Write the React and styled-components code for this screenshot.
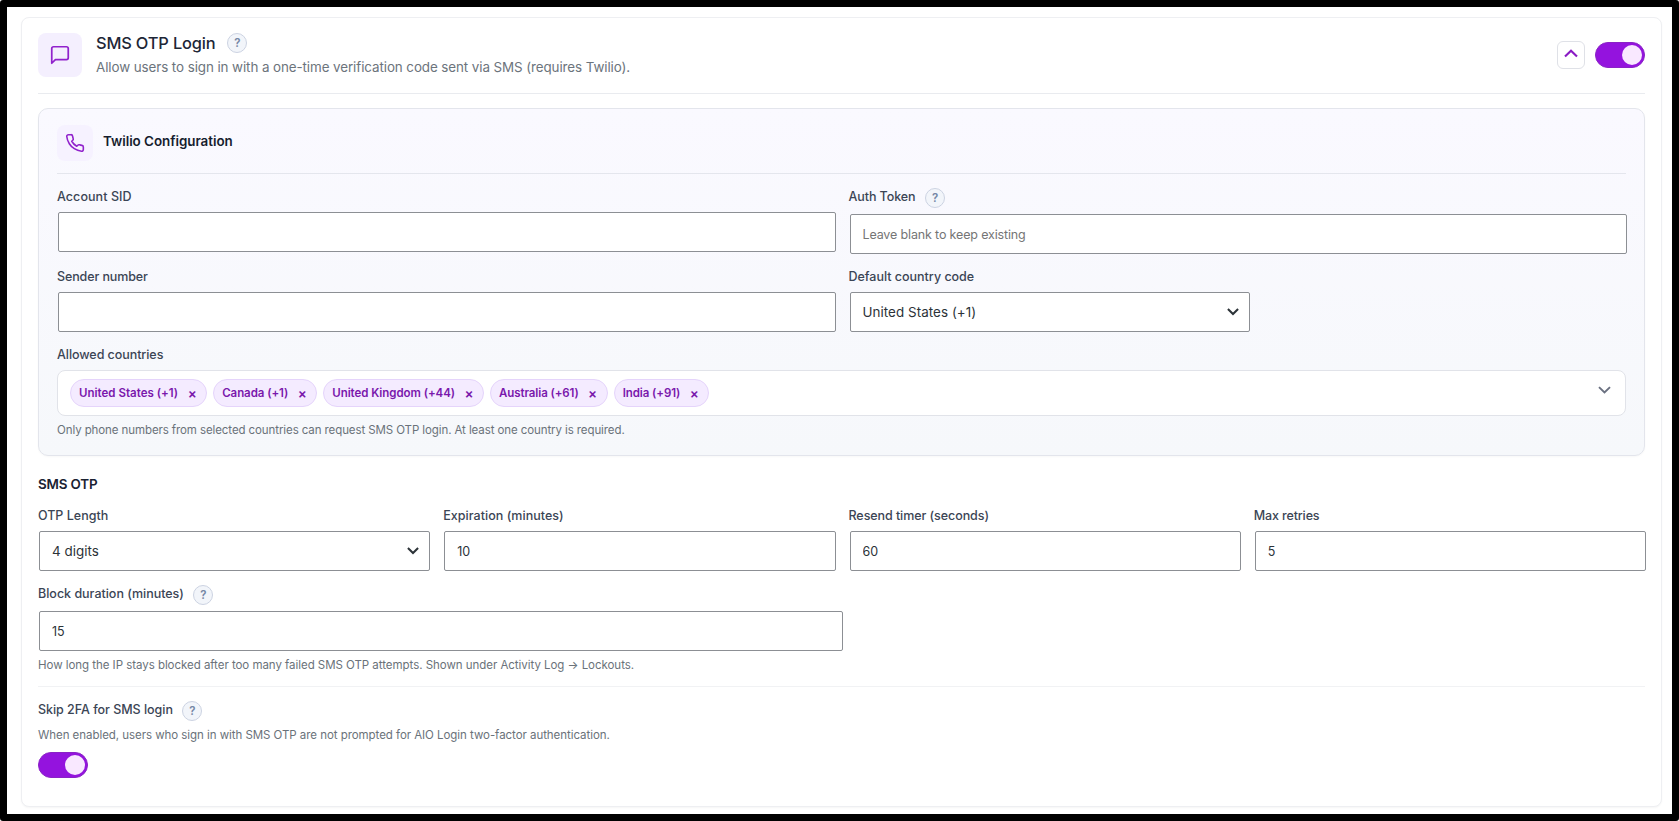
import React from "react";
import styled, { createGlobalStyle, css } from "styled-components";

const GlobalStyle = createGlobalStyle`
  *, *::before, *::after { box-sizing: border-box; }
  body { margin: 0; background: #fff; }
  body, input, button {
    font-family: Inter, "Liberation Sans", sans-serif;
  }
`;

const spacing = css`
  letter-spacing: ${({ $ls = 0 }) => $ls}px;
`;

const Frame = styled.div`
  height: 821px;
  padding: 10px 10px 7px 14px;
  background: #fff;
  border: 7px solid #000;
  border-radius: 3px;
`;

const Card = styled.main`
  height: 790px;
  padding: 15px 16px;
  background: #fff;
  border: 1px solid #eeeff2;
  border-radius: 8px;
  box-shadow: 0 1px 2px rgba(0, 0, 0, 0.04);
`;

const Header = styled.header`
  display: flex;
  align-items: center;
  padding-bottom: 16px;
  border-bottom: 1px solid #e9ebef;
`;

const IconTile = styled.span`
  display: grid;
  flex: none;
  place-items: center;
  width: ${({ $size }) => $size}px;
  height: ${({ $size }) => $size}px;
  background: ${({ $pale }) => ($pale ? "#f6f2ff" : "#f4effe")};
  border-radius: 8px;
  color: #9122cc;
`;

const HeaderText = styled.div`
  flex: 1;
  height: 46px;
  margin: -1px 0 -1px 14px;
`;

const TitleRow = styled.div`
  display: flex;
  gap: 12px;
  height: 25px;
`;

const Title = styled.h1`
  margin: 0;
  color: #1d2636;
  font-size: 16.4px;
  font-weight: 500;
  line-height: 23px;
  white-space: nowrap;
  ${spacing}
`;

const Subtitle = styled.p`
  margin: 0;
  color: #6c747c;
  font-size: 13.4px;
  line-height: 20px;
  ${spacing}
`;

const HelpBadge = styled.span`
  display: grid;
  flex: none;
  place-items: center;
  width: 20px;
  height: 20px;
  margin-top: 1px;
  background: #f2f5fa;
  border: 1px solid #ccd3e2;
  border-radius: 50%;
  color: #7587a6;
  font-size: 11.5px;
  font-weight: 600;
  line-height: 18px;
`;

const CollapseButton = styled.button`
  display: grid;
  place-items: center;
  width: 28px;
  height: 28px;
  margin-right: 10px;
  padding: 0 0 4px;
  background: #fff;
  border: 1px solid #dfe1e7;
  border-radius: 6px;
  color: #8a1bc4;
`;

const Switch = styled.button`
  display: flex;
  align-items: center;
  justify-content: flex-end;
  width: 50px;
  height: 26px;
  padding: 0 2px;
  background: #9413de;
  border: 1px solid #8a22c6;
  border-radius: 13px;
`;

const Knob = styled.span`
  width: 20px;
  height: 20px;
  background: #f9e8ff;
  border-radius: 50%;
`;

const Panel = styled.section`
  height: 348px;
  margin-top: 14px;
  padding: 16px 18px;
  background: linear-gradient(180deg, #faf9ff 0%, #f6f8fb 100%);
  border: 1px solid #e3e5ec;
  border-radius: 10px;
  box-shadow: 0 1px 2px rgba(0, 0, 0, 0.03);
`;

const PanelHeader = styled.div`
  display: flex;
  align-items: center;
  gap: 10px;
  margin-bottom: 13px;
  padding-bottom: 12px;
  border-bottom: 1px solid #e4e6ed;
`;

const PanelTitle = styled.h2`
  margin: 0;
  padding-bottom: 4px;
  color: #161d2e;
  font-size: 13.4px;
  font-weight: 600;
  line-height: 20px;
  ${spacing}
`;

const SectionTitle = styled.h2`
  height: 32px;
  margin: 18px 0 0;
  color: #1a2232;
  font-size: 13.4px;
  font-weight: 600;
  line-height: 20px;
  ${spacing}
`;

const Grid = styled.div`
  display: grid;
  grid-template-columns: repeat(${({ $cols }) => $cols}, 1fr);
  gap: 13px 14px;
`;

const FieldBox = styled.div`
  width: ${({ $half }) => ($half ? "804px" : "auto")};
  margin-top: ${({ $top = 0 }) => $top}px;
`;

const LabelRow = styled.div`
  display: flex;
  gap: 9.5px;
  margin-bottom: ${({ $tight }) => ($tight ? 4 : 5)}px;
`;

const Label = styled.label`
  color: #3b4555;
  font-size: 12.5px;
  font-weight: 500;
  line-height: 20px;
  white-space: nowrap;
  ${spacing}
`;

const HelpSlot = styled.span`
  height: 22px;
`;

const Control = styled.input`
  display: block;
  width: 100%;
  height: 40px;
  padding: 0 12px;
  background: #fff;
  border: 1px solid #8c8f94;
  border-radius: 2px;
  color: #2c3338;
  font-size: 12.5px;
  transform: translateX(1px);
  ${spacing}

  &::placeholder {
    color: #757575;
    opacity: 1;
  }
`;

const SelectBox = styled.div`
  display: flex;
  align-items: center;
  justify-content: space-between;
  width: ${({ $width }) => $width || "100%"};
  height: 40px;
  padding: 0 10px 0 12px;
  background: #fff;
  border: 1px solid #8c8f94;
  border-radius: 2px;
  color: #2c3338;
  font-size: 13.4px;
  line-height: 20px;
  transform: translateX(1px);
  ${spacing}
`;

const SelectValue = styled.span`
  padding-bottom: 1px;
`;

const TagBox = styled.div`
  display: flex;
  align-items: center;
  gap: 6px;
  height: 46px;
  padding: 0 14px 0 12px;
  background: #fff;
  border: 1px solid #e1e3e9;
  border-radius: 8px;
`;

const TagList = styled.div`
  display: flex;
  flex: 1;
  gap: 6px;
`;

const TagChevron = styled.span`
  display: flex;
  padding-bottom: 6px;
  color: #6a7080;
`;

const Tag = styled.span`
  display: flex;
  align-items: center;
  height: 28px;
  padding: 0 7px 0 8px;
  background: #f4ebff;
  border: 1px solid #e5d4fb;
  border-radius: 14px;
  color: #7a18ac;
`;

const TagText = styled.span`
  margin-right: 7px;
  padding-bottom: 1px;
  font-size: 11.5px;
  font-weight: 600;
  line-height: 16px;
  white-space: nowrap;
  ${spacing}
`;

const TagRemove = styled.span`
  width: 14px;
  font-size: 13.5px;
  font-weight: 600;
  line-height: 16px;
  text-align: center;
`;

const Hint = styled.p`
  margin: ${({ $top = 5 }) => $top}px 0 0;
  color: #6a727a;
  font-size: 11.5px;
  line-height: 18px;
  white-space: nowrap;
  ${spacing}
`;

const SkipSection = styled.section`
  margin-top: 12px;
  padding-top: 13px;
  border-top: 1px solid #f1f2f4;
`;

const SwitchSlot = styled.div`
  margin-top: 8px;
`;

const MessageIcon = () => (
  <svg width="22" height="22" viewBox="0 0 24 24" fill="none" stroke="currentColor" strokeWidth="1.9" strokeLinecap="round" strokeLinejoin="round">
    <path d="M21 15a2 2 0 0 1-2 2H7l-4 4V5a2 2 0 0 1 2-2h14a2 2 0 0 1 2 2z" />
  </svg>
);

const PhoneIcon = () => (
  <svg width="20" height="20" viewBox="0 0 24 24" fill="none" stroke="currentColor" strokeWidth="1.9" strokeLinecap="round" strokeLinejoin="round">
    <path d="M22 16.92v3a2 2 0 0 1-2.18 2 19.79 19.79 0 0 1-8.63-3.07 19.5 19.5 0 0 1-6-6 19.79 19.79 0 0 1-3.07-8.67A2 2 0 0 1 4.11 2h3a2 2 0 0 1 2 1.72c.13.96.36 1.9.7 2.81a2 2 0 0 1-.45 2.11L8.09 9.91a16 16 0 0 0 6 6l1.27-1.27a2 2 0 0 1 2.11-.45c.91.34 1.85.57 2.81.7A2 2 0 0 1 22 16.92z" />
  </svg>
);

const ChevronUp = () => (
  <svg width="14" height="9" viewBox="0 0 14 9" fill="none" stroke="currentColor" strokeWidth="2.1">
    <path d="M1 7.6 7 1.7l6 5.9" />
  </svg>
);

const ChevronDown = ({ large }) => (
  <svg width={large ? 13 : 12} height={large ? 8 : 7.4} viewBox="0 0 13 8" fill="none" stroke="currentColor" strokeWidth={large ? 1.9 : 2.2}>
    <path d="m1 1.1 5.5 5.4L12 1.1" />
  </svg>
);

const Toggle = ({ label }) => (
  <Switch role="switch" aria-checked="true" aria-label={label}>
    <Knob />
  </Switch>
);

const LabelLine = ({ text, ls, help, tight }) => (
  <LabelRow $tight={tight}>
    <Label $ls={ls}>{text}</Label>
    {help && (
      <HelpSlot>
        <HelpBadge>?</HelpBadge>
      </HelpSlot>
    )}
  </LabelRow>
);

const Field = ({ label, ls, help, half, top, children }) => (
  <FieldBox $half={half} $top={top}>
    <LabelLine text={label} ls={ls} help={help} />
    {children}
  </FieldBox>
);

const Select = ({ value, width, ls }) => (
  <SelectBox $width={width} $ls={ls}>
    <SelectValue>{value}</SelectValue>
    <ChevronDown />
  </SelectBox>
);

const countries = [
  { name: "United States (+1)", ls: 0.02 },
  { name: "Canada (+1)", ls: -0.06 },
  { name: "United Kingdom (+44)", ls: -0.05 },
  { name: "Australia (+61)", ls: -0.1 },
  { name: "India (+91)", ls: -0.08 },
];

export default function App() {
  return (
    <>
      <GlobalStyle />
      <Frame>
        <Card>
          <Header>
            <IconTile $size={44}>
              <MessageIcon />
            </IconTile>
            <HeaderText>
              <TitleRow>
                <Title $ls={-0.16}>SMS OTP Login</Title>
                <HelpSlot>
                  <HelpBadge>?</HelpBadge>
                </HelpSlot>
              </TitleRow>
              <Subtitle $ls={-0.087}>
                Allow users to sign in with a one-time verification code sent via SMS (requires Twilio).
              </Subtitle>
            </HeaderText>
            <CollapseButton aria-label="Collapse">
              <ChevronUp />
            </CollapseButton>
            <Toggle label="SMS OTP Login" />
          </Header>

          <Panel>
            <PanelHeader>
              <IconTile $size={36} $pale>
                <PhoneIcon />
              </IconTile>
              <PanelTitle $ls={-0.03}>Twilio Configuration</PanelTitle>
            </PanelHeader>
            <Grid $cols={2}>
              <Field label="Account SID" ls={0.07}>
                <Control readOnly />
              </Field>
              <Field label="Auth Token" ls={-0.08} help>
                <Control placeholder="Leave blank to keep existing" $ls={-0.15} />
              </Field>
              <Field label="Sender number" ls={-0.11}>
                <Control readOnly />
              </Field>
              <Field label="Default country code" ls={-0.01}>
                <Select value="United States (+1)" width="400px" ls={0.06} />
              </Field>
            </Grid>
            <Field label="Allowed countries" ls={-0.06} top={13}>
              <TagBox>
                <TagList>
                  {countries.map(({ name, ls }) => (
                    <Tag key={name}>
                      <TagText $ls={ls}>{name}</TagText>
                      <TagRemove>×</TagRemove>
                    </Tag>
                  ))}
                </TagList>
                <TagChevron>
                  <ChevronDown large />
                </TagChevron>
              </TagBox>
              <Hint $ls={-0.095}>
                Only phone numbers from selected countries can request SMS OTP login. At least one country is required.
              </Hint>
            </Field>
          </Panel>

          <SectionTitle $ls={-0.15}>SMS OTP</SectionTitle>
          <Grid $cols={4}>
            <Field label="OTP Length">
              <Select value="4 digits" ls={0.02} />
            </Field>
            <Field label="Expiration (minutes)" ls={0.03}>
              <Control defaultValue="10" />
            </Field>
            <Field label="Resend timer (seconds)" ls={-0.07}>
              <Control defaultValue="60" />
            </Field>
            <Field label="Max retries" ls={-0.14}>
              <Control defaultValue="5" />
            </Field>
          </Grid>
          <Field label="Block duration (minutes)" ls={-0.01} top={13} help half>
            <Control defaultValue="15" />
            <Hint $ls={-0.04}>
              How long the IP stays blocked after too many failed SMS OTP attempts. Shown under Activity Log → Lockouts.
            </Hint>
          </Field>

          <SkipSection>
            <LabelLine text="Skip 2FA for SMS login" ls={-0.03} help tight />
            <Hint $top={0} $ls={-0.05}>
              When enabled, users who sign in with SMS OTP are not prompted for AIO Login two-factor authentication.
            </Hint>
            <SwitchSlot>
              <Toggle label="Skip 2FA for SMS login" />
            </SwitchSlot>
          </SkipSection>
        </Card>
      </Frame>
    </>
  );
}
